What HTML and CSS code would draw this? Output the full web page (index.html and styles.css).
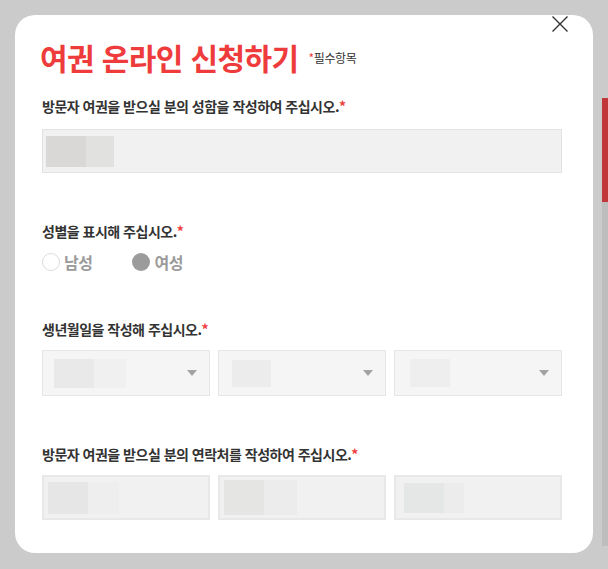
FILE: index.html
```html
<!DOCTYPE html>
<html lang="ko">
<head>
<meta charset="utf-8">
<title>여권 온라인 신청하기</title>
<link rel="stylesheet" href="styles.css">
</head>
<body>
<div class="modal">
  <button class="close" type="button" aria-label="닫기">
    <svg width="16" height="16" viewBox="0 0 16 16"><path d="M0.5 0.5 L15.5 15.5 M15.5 0.5 L0.5 15.5" stroke="#333" stroke-width="1.4" fill="none"/></svg>
  </button>
  <div class="head">
    <h1 class="title">여권 온라인 신청하기</h1>
    <span class="req"><em>*</em>필수항목</span>
  </div>

  <section class="q q-name">
    <p class="label">방문자 여권을 받으실 분의 성함을 작성하여 주십시오.<em>*</em></p>
    <div class="field input name"><span class="blk n1"></span><span class="blk n2"></span></div>
  </section>

  <section class="q q-gender">
    <p class="label">성별을 표시해 주십시오.<em>*</em></p>
    <div class="radios">
      <label class="radio"><span class="dot"></span>남성</label>
      <label class="radio on"><span class="dot"></span>여성</label>
    </div>
  </section>

  <section class="q q-birth">
    <p class="label">생년월일을 작성해 주십시오.<em>*</em></p>
    <div class="row">
      <div class="field select s1"><span class="blk a1"></span><span class="blk a2"></span><span class="arrow"></span></div>
      <div class="field select s2"><span class="blk b1"></span><span class="arrow"></span></div>
      <div class="field select s3"><span class="blk c1"></span><span class="arrow"></span></div>
    </div>
  </section>

  <section class="q q-phone">
    <p class="label">방문자 여권을 받으실 분의 연락처를 작성하여 주십시오.<em>*</em></p>
    <div class="row">
      <div class="field phone p1"><span class="blk d1"></span><span class="blk d2"></span></div>
      <div class="field phone p2"><span class="blk e1"></span><span class="blk e2"></span></div>
      <div class="field phone p3"><span class="blk f1"></span><span class="blk f2"></span></div>
    </div>
  </section>
</div>
<div class="scroll"><div class="thumb"></div></div>
</body>
</html>
```
FILE: styles.css
```css
html, body {
  margin: 0;
  height: 100%;
}
body {
  background: #cbcbcb;
  font-family: "Noto Sans CJK KR", "Noto Sans", sans-serif;
  overflow: hidden;
}
.modal {
  position: relative;
  box-sizing: border-box;
  margin: 15px;
  width: 578px;
  height: 538px;
  background: #fff;
  border-radius: 20px;
  padding: 24px 31px 0 27px;
}
.close {
  position: absolute;
  top: 1px;
  right: 25px;
  width: 16px;
  height: 16px;
  padding: 0;
  border: 0;
  background: none;
  display: block;
}
.close svg { display: block; }
.head {
  display: flex;
  align-items: center;
  gap: 10px;
}
.title {
  margin: 0 0 0 -2px;
  font-size: 30px;
  line-height: 36px;
  font-weight: 700;
  color: #ee3c3c;
  letter-spacing: -0.6px;
}
.req {
  font-size: 12px;
  line-height: 16px;
  color: #333;
  letter-spacing: -0.4px;
  margin-top: 2px;
}
.req em, .label em {
  font-style: normal;
  color: #ee3c3c;
}
.label {
  margin: 0;
  font-size: 14px;
  line-height: 20px;
  font-weight: 700;
  color: #333;
  letter-spacing: -0.5px;
}
.q-name { margin-top: 21px; }
.q-gender { margin-top: 48px; }
.q-birth { margin-top: 47px; }
.q-phone { margin-top: 48px; }

.field {
  box-sizing: border-box;
  display: flex;
  align-items: center;
  position: relative;
}
.input {
  margin-top: 13px;
  height: 44px;
  background: #f1f1f1;
  border: 1px solid #e2e2e2;
  padding-left: 3px;
}
.row {
  margin-top: 11px;
  display: grid;
  grid-template-columns: repeat(3, 1fr);
  gap: 8px;
}
.select {
  height: 46px;
  background: #f5f5f5;
  border: 1px solid #e6e6e6;
  padding-left: 11px;
}
.phone {
  height: 45px;
  background: #f1f1f1;
  border: 2px solid #e8e8e8;
  padding-left: 4px;
}
.arrow {
  margin-left: auto;
  margin-right: 12px;
  width: 0;
  height: 0;
  border-left: 5px solid transparent;
  border-right: 5px solid transparent;
  border-top: 6px solid #a3a3a3;
}
.blk { display: block; flex: none; }
.n1 { width: 40px; height: 31px; background: #d9d8d6; }
.n2 { width: 28px; height: 31px; background: #e1e1e0; }
.a1 { width: 40px; height: 29px; background: #e9e9e9; }
.a2 { width: 32px; height: 29px; background: #f0f0f0; }
.b1 { width: 39px; height: 27px; background: #ececec; margin-left: 2px; }
.c1 { width: 40px; height: 28px; background: #eeeeee; margin-left: 4px; }
.d1 { width: 40px; height: 32px; background: #e6e6e6; }
.d2 { width: 31px; height: 32px; background: #eeeeee; }
.e1 { width: 40px; height: 35px; background: #e5e5e4; }
.e2 { width: 33px; height: 35px; background: #ececec; }
.f1 { width: 40px; height: 30px; background: #e5e7e6; margin-left: 4px; }
.f2 { width: 20px; height: 30px; background: #ececec; }

.radios {
  margin-top: 11px;
  display: flex;
  align-items: center;
  gap: 40px;
  height: 20px;
}
.radio {
  display: flex;
  align-items: center;
  gap: 4px;
  font-size: 16px;
  font-weight: 700;
  color: #9b9b9b;
  letter-spacing: -0.5px;
}
.dot {
  box-sizing: border-box;
  width: 18px;
  height: 18px;
  border-radius: 50%;
  border: 1px solid #dcdcdc;
  background: #fff;
}
.radio.on .dot {
  border: 0;
  background: #9b9b9b;
}
.scroll {
  position: absolute;
  left: 602px;
  top: 98px;
  width: 6px;
  height: 448px;
  background: #bdbdbd;
}
.thumb {
  height: 104px;
  background: #c1363b;
}
```
